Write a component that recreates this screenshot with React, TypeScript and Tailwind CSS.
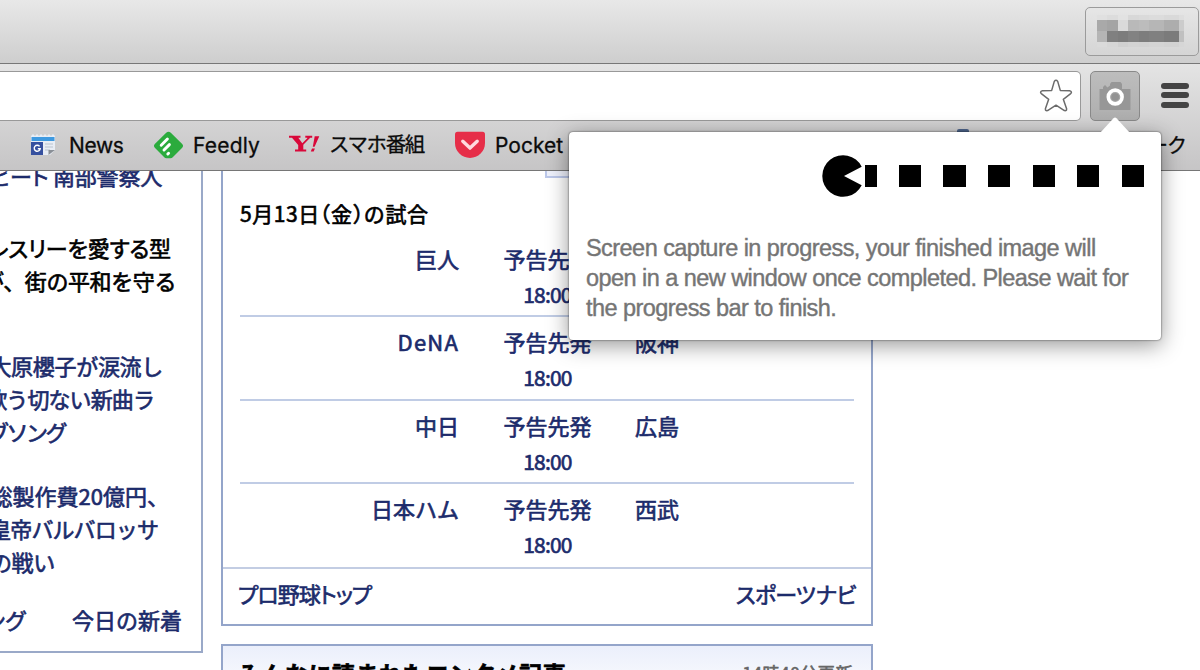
import React from "react";

const leftLines = [
  { text: "ビート 南部警察人", cls: "mt-[-12px] pr-[39px] text-[#1c2b6b] tracking-[-0.2px] [font-feature-settings:'palt']" },
  { text: "レスリーを愛する型", cls: "mt-[39px] pr-[30px] text-black tracking-[-0.1px] [font-feature-settings:'palt']" },
  { text: "が、街の平和を守る", cls: "pr-[25px] text-black tracking-[-0.400px]" },
  { text: "大原櫻子が涙流し", cls: "mt-[52px] pr-[38px] text-[#1c2b6b] tracking-[-0.300px]" },
  { text: "歌う切ない新曲ラ", cls: "pr-[47px] text-[#1c2b6b] tracking-[-0.900px]" },
  { text: "ブソング", cls: "pr-[136px] text-[#1c2b6b] tracking-[-2.500px]" },
  { text: "総製作費20億円、", cls: "mt-[31px] pr-[32px] text-[#1c2b6b] tracking-[0px]" },
  { text: "皇帝バルバロッサ", cls: "pr-[43px] text-[#1c2b6b] tracking-[-0.900px]" },
  { text: "の戦い", cls: "pr-[146px] text-[#1c2b6b] tracking-[-0.300px]" },
];

const games = [
  { home: "巨人", away: "" },
  { home: "DeNA", away: "阪神" },
  { home: "中日", away: "広島" },
  { home: "日本ハム", away: "西武" },
];

const mosaic = [
  "bg-[#e0e0e0]", "bg-[#dcdcdc]", "bg-[#e2e2e2]", "bg-[#d8d8d8]", "bg-[#dadada]", "bg-[#dcdcdc]", "bg-[#d9d9d9]", "bg-[#dedede]",
  "bg-[#a9a9a9]", "bg-[#a4a4a4]", "bg-[#dadada]", "bg-[#b9b9b9]", "bg-[#bcbcbc]", "bg-[#b6b6b6]", "bg-[#adadad]", "bg-[#cccccc]",
  "bg-[#b5b5b5]", "bg-[#808080]", "bg-[#7c7c7c]", "bg-[#828282]", "bg-[#7d7d7d]", "bg-[#808080]", "bg-[#7b7b7b]", "bg-[#c0c0c0]",
  "bg-[#dadada]", "bg-[#d6d6d6]", "bg-[#d0d0d0]", "bg-[#d3d3d3]", "bg-[#d2d2d2]", "bg-[#d4d4d4]", "bg-[#d2d2d2]", "bg-[#d6d6d6]",
];

function NewsIcon() {
  return (
    <svg width="26" height="24" viewBox="0 0 26 24">
      <path d="M1 3l2-2 2 2 2-2 2 2 2-2 2 2 2-2 2 2 2-2 2 2 2-2 2 2v14l-5 5H1z" fill="#e8edf5" />
      <rect x="1.500" y="4" width="23" height="4" fill="#3f9ae0" />
      <rect x="1" y="9" width="12" height="13" fill="#36509f" />
      <path d="M9.600 13.400a3 3 0 1 0 .6 2.400H7.800" fill="none" stroke="#fff" strokeWidth="1.400" />
      <path d="M15 11h8M15 14h8M15 17h5" stroke="#b9c3cf" strokeWidth="1.200" />
      <path d="M18.500 22v-5H25z" fill="#8a8f96" />
    </svg>
  );
}

function FeedlyIcon() {
  return (
    <svg width="31" height="28" viewBox="0 0 31 28">
      <path d="M13.200 1.800q2.300-2.200 4.600 0l11.400 11.100q1.700 1.900 0 3.800L20 26q-1 1.200-2.600 1.200h-4Q12 27.200 11 26l-9.200-9.300q-1.700-1.900 0-3.800z" fill="#2bab3d" />
      <path d="M8.200 14.200l6.200-6.200M11 19l5.400-5.400M14.800 23l.8-.8" stroke="#fff" strokeWidth="2.900" strokeLinecap="round" />
    </svg>
  );
}

function YahooIcon() {
  return (
    <svg width="31" height="19" viewBox="0 0 31 19" fill="#d9083a">
      <path d="M0 .8h11.500v2H9.300l4 5.400 5-4.900V2.800h-2V.8h6.900v2h-2l-6.900 6.900v4.800h2.900v2H6v-2h3.200V9.900L3 2.800H0z" />
      <path d="M25.700 1.200h4.600l-4.700 10.600h-1.800zM23 13.600h2.900l-1.200 2.900h-2.900z" />
    </svg>
  );
}

function PocketIcon() {
  return (
    <svg width="30" height="28" viewBox="0 0 30 28">
      <path d="M2.500.7h25Q30 .7 30 3.200V12a15 15 0 0 1-30 0V3.200Q0 .7 2.500.7z" fill="#e62e49" />
      <path d="M7.800 10.200l7.200 6.900 7.200-6.900" fill="none" stroke="#ffd9df" strokeWidth="3.400" strokeLinecap="round" strokeLinejoin="round" />
    </svg>
  );
}

function Bookmarks() {
  return (
    <div className="mt-[-1px] flex h-[49px] items-center pl-[30px] text-[21px] text-[#0b0b0b] [-webkit-text-stroke:0.3px]">
      <NewsIcon />
      <span className="ml-[13px] w-[84px] pt-[2px] tracking-[-0.400px]">News</span>
      <FeedlyIcon />
      <span className="ml-[9px] w-[96px] pt-[2px] tracking-[0.2px]">Feedly</span>
      <YahooIcon />
      <span className="ml-[9px] w-[126px] pt-[2px] text-[20.500px] tracking-[-1.400px]">スマホ番組</span>
      <PocketIcon />
      <span className="ml-[10px] pt-[2px] tracking-[0px]">Pocket</span>
      <span className="mt-[-26px] ml-[394px] h-[5px] w-[12px] rounded-[2px] bg-[#4d648b]" />
      <span className="mr-[14px] ml-auto pt-[2px] text-[20px] tracking-[-1px]">ーク</span>
    </div>
  );
}

function Popup() {
  return (
    <div className="absolute top-[132px] left-[569px] h-[208px] w-[592px] rounded-[4px] bg-white shadow-[0_0_2px_rgba(0,0,0,0.75),0_5px_22px_rgba(0,0,0,0.42)]">
      <svg className="absolute top-[-15px] left-[531px]" width="30" height="16" viewBox="0 0 30 16">
        <path d="M0 16L13.500 1.200q1.500-1.500 3 0L30 16z" fill="#fff" />
      </svg>
      <div className="flex h-[88px] items-center justify-end pr-[17px]">
        <svg width="40" height="42" viewBox="0 0 40 42">
          <path d="M22 21L39.700 11.700A20.800 20.800 0 1 0 39.700 30.300z" />
        </svg>
        <span className="ml-[3px] h-[22px] w-[11.500px] bg-black" />
        <div className="ml-[22px] flex gap-[22.300px]">
          {[0, 1, 2, 3, 4, 5].map((i) => (
            <span key={i} className="h-[22px] w-[22.300px] bg-black" />
          ))}
        </div>
      </div>
      <p className="mt-[13px] ml-[17px] font-['Liberation_Sans',sans-serif] text-[23.500px] leading-[30px] tracking-[-0.550px] whitespace-nowrap text-[#757575] [-webkit-text-stroke:0.4px]">
        Screen capture in progress, your finished image will
        <br />
        open in a new window once completed. Please wait for
        <br />
        the progress bar to finish.
      </p>
    </div>
  );
}

export default function App() {
  return (
    <div className="relative flex h-[670px] w-[1200px] flex-col overflow-hidden bg-white font-['Inter','Noto_Sans_CJK_JP',sans-serif] whitespace-nowrap">
      <div className="flex h-[64px] shrink-0 justify-end border-b border-[#777] bg-linear-to-b from-[#e8e8e8] to-[#cecece] pt-[7px] pr-[1px]">
        <div className="flex h-[49px] w-[114px] justify-center rounded-[5px] border border-[#9b9b9b] bg-linear-to-b from-[#e6e6e6] to-[#d5d5d5] pt-[7px]">
          <div className="mr-[3px] grid h-[34px] w-[87px] grid-cols-[10px_11px_10px_10.500px_10.500px_15px_15px_5px] grid-rows-[5px_11px_11px_5px]">
            {mosaic.map((c, i) => (
              <span key={i} className={c} />
            ))}
          </div>
        </div>
      </div>
      <div className="h-[107px] shrink-0 border-b border-[#767676] bg-linear-to-b from-[#e4e4e4] to-[#c6c5c6]">
        <div className="flex h-[57px] items-start pt-[7px]">
          <div className="flex h-[50px] w-[1081px] items-center justify-end rounded-r-[5px] border border-l-0 border-[#999] bg-white pr-[7px]">
            <svg width="34" height="34" viewBox="0 0 34 34">
              <path
                d="M15.300 2.400Q17 .2 18.700 2.400L21.300 11.400 30.600 11.800Q33.600 12.600 31.700 14.600L24.300 20.300 27.600 29.700Q27.800 32.200 25.400 31.600L17 26.200 8.600 31.600Q6.200 32.200 6.400 29.700L9.700 20.300 2.300 14.600Q.4 12.600 3.400 11.800L12.700 11.400z"
                fill="#fff"
                stroke="#6b6b6b"
                strokeWidth="1.500"
                strokeLinejoin="round"
              />
            </svg>
          </div>
          <div className="ml-[9px] flex h-[50px] w-[50px] items-center justify-center rounded-[5px] border border-[#898989] bg-linear-to-b from-[#bdbdbd] to-[#aeaeae]">
            <svg width="32" height="28" viewBox="0 0 32 28">
              <path d="M.5 7H4V5l2-2 2.500 2.500L11 3.500V2l1.500-2h9L23 2v5h8.500v21H.5z" fill="#979797" />
              <circle cx="16.200" cy="15" r="6.900" fill="#a6a6a6" stroke="#fff" strokeWidth="3.600" />
              <circle cx="16.200" cy="15" r="3.800" fill="#939393" />
            </svg>
          </div>
          <div className="mt-[12px] ml-[21px] flex flex-col gap-[3.600px]">
            <span className="h-[5.800px] w-[28px] rounded-[3px] bg-[#444]" />
            <span className="h-[5.800px] w-[28px] rounded-[3px] bg-[#444]" />
            <span className="h-[5.800px] w-[28px] rounded-[3px] bg-[#444]" />
          </div>
        </div>
        <Bookmarks />
      </div>

      <div className="flex h-[499px] items-start overflow-hidden font-['Noto_Sans_CJK_JP',sans-serif] text-[22px] text-[#1c2b6b] [-webkit-text-stroke:0.65px]">
        <div className="h-[482px] w-[203px] shrink-0 border-r-2 border-b-2 border-[#9aa9c8]">
          {leftLines.map((l) => (
            <div key={l.text} className={"flex h-[33px] items-center justify-end leading-[33px] whitespace-pre " + l.cls}>
              {l.text}
            </div>
          ))}
          <div className="mt-[25px] flex h-[33px] items-center justify-end gap-[46px] pr-[19px] leading-[33px]">
            <span className="tracking-[-1px]">ング</span>
            <span>今日の新着</span>
          </div>
        </div>

        <div className="ml-[18px] w-[652px] shrink-0">
          <div className="h-[455px] border-2 border-t-0 border-[#94a5ca]">
            <div className="flex justify-end">
              <div className="mr-[190px] h-[7px] w-[136px] border-2 border-t-0 border-[#bcc8ea] bg-[#eef1fc]" />
            </div>
            <div className="mt-[19px] h-[34px] pl-[17px] text-[21px] leading-[33px] tracking-[0.600px] text-black">
              <span>5月13日</span>
              <span className="[font-feature-settings:'halt']">（金）</span>
              <span>の試合</span>
            </div>
            <div className="mx-[17px] mt-[2.500px]">
              {games.map((g, i) => (
                <div
                  key={g.home}
                  className={
                    "grid h-[83.500px] grid-cols-[219px_177px_1fr] pt-[7px] leading-[35px] " +
                    (i < 3 ? "border-b-2 border-[#c0cce5]" : "")
                  }
                >
                  <span className={"text-right " + (g.home === "DeNA" ? "tracking-[1.200px]" : "")}>{g.home}</span>
                  <span className="text-center">
                    <span className="block">予告先発</span>
                    <span className="block text-[21px] leading-[36px] tracking-[-0.800px]">18:00</span>
                  </span>
                  <span className="ml-[-1px]">{g.away}</span>
                </div>
              ))}
            </div>
            <div className="mt-[-1px] flex h-[57px] items-center justify-between border-t-2 border-[#c3cde3] pr-[15px] pb-[6px] pl-[15px]">
              <span className="tracking-[-1px] [font-feature-settings:'palt']">プロ野球トップ</span>
              <span className="tracking-[-1.700px]">スポーツナビ</span>
            </div>
          </div>
          <div className="mt-[18px] flex h-[60px] items-start justify-between border-2 border-[#94a5ca] bg-linear-to-b from-[#ebeffb] to-white pt-[11px] pr-[18px] pl-[15px]">
            <span className="text-[23px] leading-[32px] font-bold tracking-[0.500px] text-black">みんなに読まれたエンタメ記事</span>
            <span className="text-[17px] leading-[32px] tracking-[0.600px] text-[#666]">14時40分更新</span>
          </div>
        </div>
      </div>
      <Popup />
    </div>
  );
}
